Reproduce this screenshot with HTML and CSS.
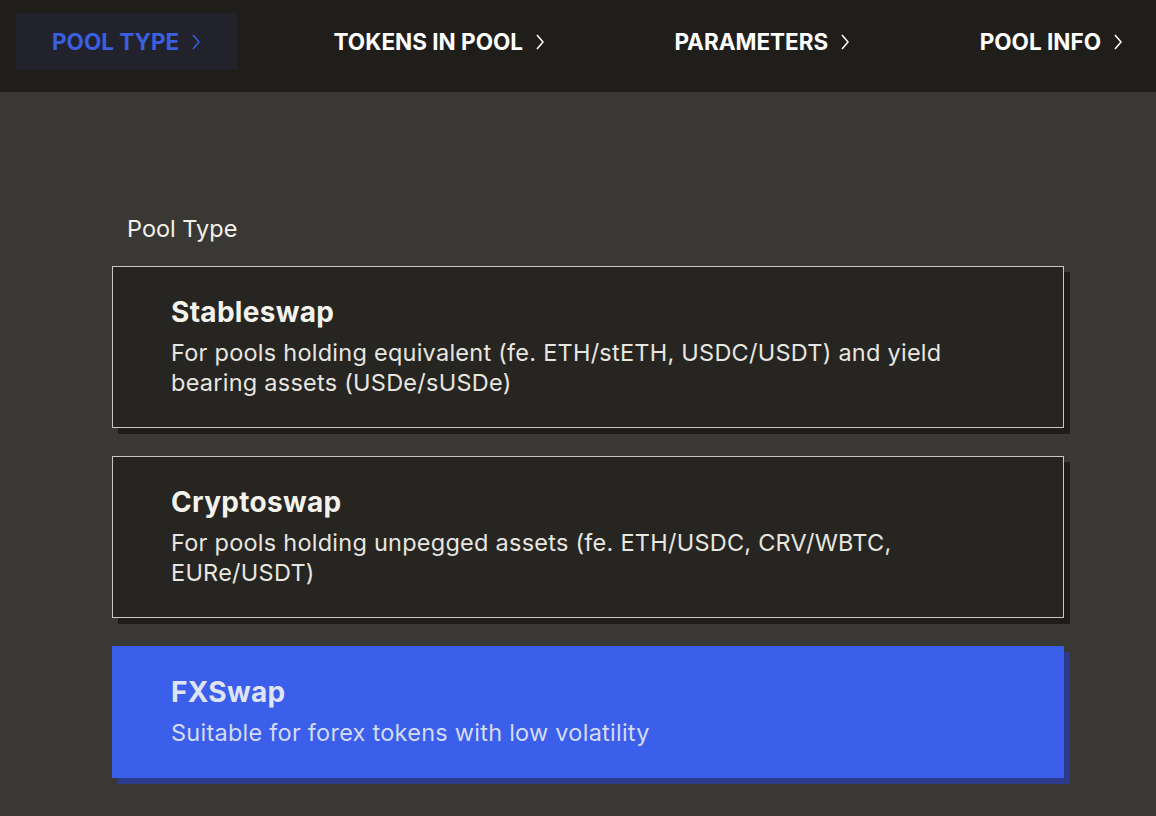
FILE: index.html
```html
<!DOCTYPE html>
<html>
<head>
<meta charset="utf-8">
<link rel="stylesheet" href="styles.css">
</head>
<body>
<nav class="steps">
  <div class="step active"><span>POOL TYPE</span><svg class="chev" viewBox="0 0 10 18"><path d="M2 2 L8 9 L2 16"/></svg></div>
  <div class="step"><span>TOKENS IN POOL</span><svg class="chev" viewBox="0 0 10 18"><path d="M2 2 L8 9 L2 16"/></svg></div>
  <div class="step"><span>PARAMETERS</span><svg class="chev" viewBox="0 0 10 18"><path d="M2 2 L8 9 L2 16"/></svg></div>
  <div class="step"><span>POOL INFO</span><svg class="chev" viewBox="0 0 10 18"><path d="M2 2 L8 9 L2 16"/></svg></div>
</nav>
<main class="content">
  <div class="label">Pool Type</div>
  <div class="cards">
    <div class="card">
      <div class="title">Stableswap</div>
      <div class="desc">For pools holding equivalent (fe. ETH/stETH, USDC/USDT) and yield bearing assets (USDe/sUSDe)</div>
    </div>
    <div class="card">
      <div class="title">Cryptoswap</div>
      <div class="desc">For pools holding unpegged assets (fe. ETH/USDC, CRV/WBTC, EURe/USDT)</div>
    </div>
    <div class="card selected">
      <div class="title">FXSwap</div>
      <div class="desc">Suitable for forex tokens with low volatility</div>
    </div>
  </div>
</main>
</body>
</html>
```

FILE: styles.css
```css
* { box-sizing: border-box; }
html, body { margin: 0; padding: 0; }
body {
  width: 1156px;
  height: 816px;
  background: #3a3834;
  font-family: Inter, "Noto Sans", sans-serif;
  overflow: hidden;
}
.steps {
  height: 92px;
  background: #1f1e1b;
  display: flex;
  justify-content: space-between;
  align-items: flex-start;
  padding: 13px 0 0 16px;
}
.step {
  height: 57px;
  display: flex;
  align-items: center;
  gap: 12px;
  padding: 0 33px 0 36px;
  color: #ffffff;
  font-size: 22.5px;
  font-weight: 700;
  letter-spacing: 0;
}
.step.active {
  background: #21222c;
  color: #3a5fe0;
  padding-right: 36px;
}
.chev {
  width: 10px;
  height: 18px;
  fill: none;
  stroke: currentColor;
  stroke-width: 1.5;
}
.content {
  padding: 122px 0 0 112px;
}
.label {
  color: #f2f0ea;
  font-size: 23.5px;
  line-height: 30px;
  padding-left: 15px;
  margin-bottom: 22px;
}
.cards {
  width: 952px;
  display: flex;
  flex-direction: column;
  gap: 28px;
}
.card {
  background: #262521;
  border: 1px solid #c9c7bf;
  box-shadow: 6px 6px 0 #1e1d1a;
  padding: 27px 58px 29px 58px;
  color: #f4f2ec;
}
.title {
  font-size: 28px;
  font-weight: 700;
  line-height: 36px;
  letter-spacing: 0.3px;
}
.desc {
  margin-top: 8px;
  font-size: 23.5px;
  line-height: 30px;
  letter-spacing: 0.25px;
  color: #e8e6e0;
}
.card.selected {
  background: #3b5fea;
  border-color: #3b5fea;
  box-shadow: 6px 6px 0 #2b3a8a;
}
.card.selected .title { color: #dfe4f7; }
.card.selected .desc { color: #d4dbf6; }
```
